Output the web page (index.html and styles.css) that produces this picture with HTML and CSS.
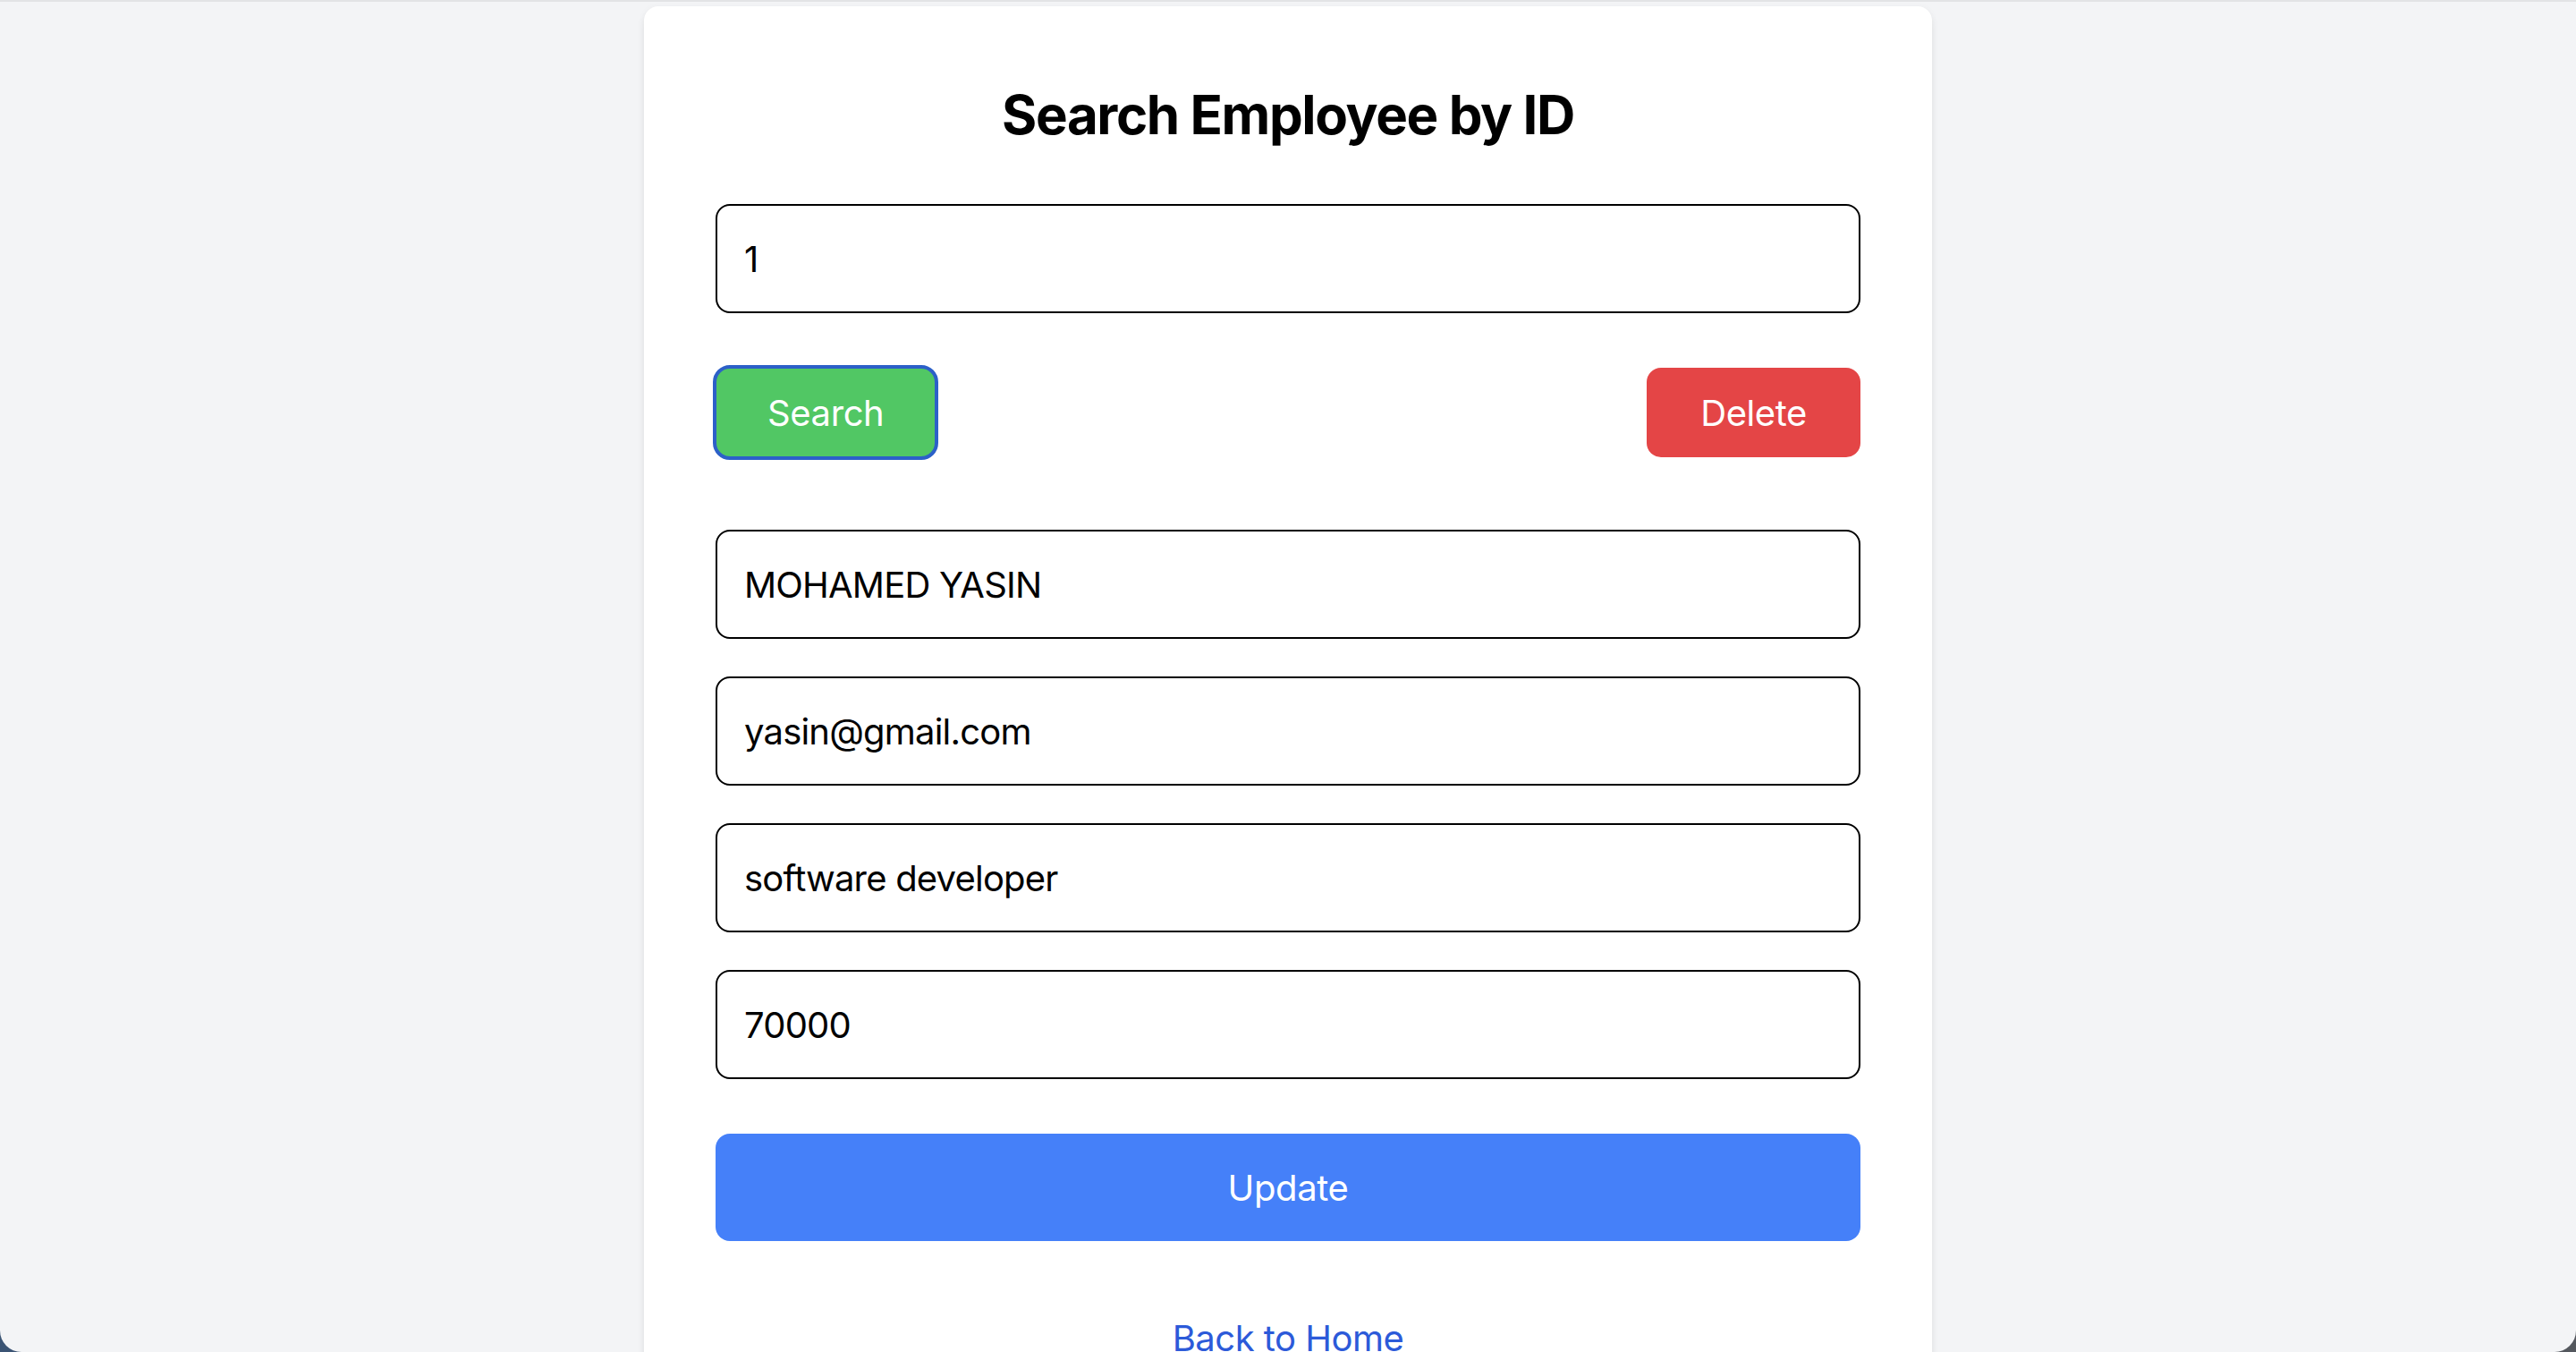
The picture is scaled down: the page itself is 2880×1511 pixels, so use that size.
FILE: index.html
```html
<!DOCTYPE html>
<html lang="en">
<head>
<meta charset="utf-8">
<title>Search Employee by ID</title>
<link rel="stylesheet" href="styles.css">
</head>
<body>
<div class="window">
  <main class="card">
    <h1 class="title">Search Employee by ID</h1>
    <input class="field field-id" type="text" value="1">
    <div class="actions">
      <button class="btn btn-search" type="button">Search</button>
      <button class="btn btn-delete" type="button">Delete</button>
    </div>
    <div class="fields">
      <input class="field" type="text" value="MOHAMED YASIN">
      <input class="field" type="text" value="yasin@gmail.com">
      <input class="field" type="text" value="software developer">
      <input class="field" type="text" value="70000">
    </div>
    <button class="btn btn-update" type="button">Update</button>
    <div class="back">
      <a class="back-link" href="#">Back to Home</a>
    </div>
  </main>
</div>
</body>
</html>
```

FILE: styles.css
```css
html {
  margin: 0;
  padding: 0;
  background: linear-gradient(90deg, #3b5474 0%, #4a5566 50%, #54585e 100%);
}

body {
  margin: 0;
  padding: 0;
  font-family: Inter, "Noto Sans", "Liberation Sans", sans-serif;
}

.window {
  box-sizing: border-box;
  height: 100vh;
  overflow: hidden;
  background: #f3f4f6;
  border-top: 2px solid #e2e3e5;
  border-radius: 0 0 24px 24px;
  display: flex;
  justify-content: center;
  align-items: flex-start;
  padding-top: 5px;
}

.card {
  box-sizing: border-box;
  width: 1440px;
  flex: none;
  background: #ffffff;
  border-radius: 16px;
  padding: 85px 80px 80px;
  box-shadow: 0 8px 12px -2px rgba(0, 0, 0, 0.08), 0 2px 8px rgba(0, 0, 0, 0.05);
}

.title {
  margin: 0 0 64px;
  font-size: 60px;
  line-height: 72px;
  font-weight: 700;
  text-align: center;
  color: #000;
  letter-spacing: -1.4px;
}

.field {
  display: block;
  box-sizing: border-box;
  width: 100%;
  height: 122px;
  margin: 0;
  padding: 0 30px;
  border: 2px solid #000;
  border-radius: 16px;
  background: #fff;
  font-family: Inter, "Noto Sans", "Liberation Sans", sans-serif;
  font-size: 40px;
  line-height: 56px;
  letter-spacing: -0.8px;
  color: #000;
  outline: none;
}

.actions {
  display: flex;
  justify-content: space-between;
  align-items: center;
  margin: 61px 0 81px;
}

.btn {
  box-sizing: border-box;
  border: none;
  font-family: Inter, "Noto Sans", "Liberation Sans", sans-serif;
  font-size: 40px;
  font-weight: 400;
  letter-spacing: -0.4px;
  color: #fff;
  cursor: pointer;
}

.btn-search,
.btn-delete {
  height: 100px;
  padding: 0 58px;
  border-radius: 16px;
}

.btn-search {
  background: #51c764;
  outline: 4px solid #2c60c8;
  outline-offset: -1px;
}

.btn-delete {
  background: #e44546;
  padding: 0 60px;
}

.fields {
  display: flex;
  flex-direction: column;
  gap: 42px;
}

.btn-update {
  display: block;
  width: 100%;
  height: 120px;
  margin-top: 61px;
  border-radius: 16px;
  background: #4580f9;
}

.back {
  margin-top: 81px;
  text-align: center;
  font-size: 40px;
  line-height: 56px;
  letter-spacing: -0.5px;
}

.back-link {
  color: #2c5ad9;
  text-decoration: none;
}
```
